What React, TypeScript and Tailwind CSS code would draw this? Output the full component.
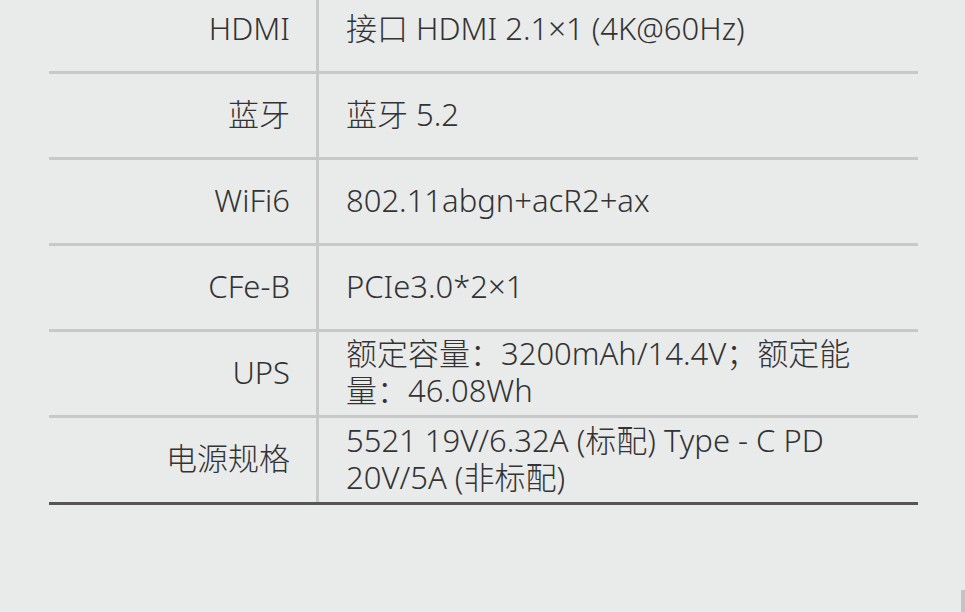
const specs: { label: string; lines: string[] }[] = [
  { label: 'HDMI', lines: ['接口 HDMI 2.1×1 (4K@60Hz)'] },
  { label: '蓝牙', lines: ['蓝牙 5.2'] },
  { label: 'WiFi6', lines: ['802.11abgn+acR2+ax'] },
  { label: 'CFe-B', lines: ['PCIe3.0*2×1'] },
  { label: 'UPS', lines: ['额定容量：3200mAh/14.4V；额定能', '量：46.08Wh'] },
  { label: '电源规格', lines: ['5521 19V/6.32A (标配) Type - C PD', '20V/5A (非标配)'] },
]

export default function App() {
  return (
    <div className="relative h-[612px] w-[965px] overflow-hidden bg-[#e9eaea] font-['Noto_Sans','Noto_Sans_CJK_SC',sans-serif] font-light text-[#333]">
      <div className="-mt-[12px] ml-[49px] w-[869px]">
        {specs.map((row, i) => (
          <div
            key={row.label}
            className={
              i === specs.length - 1
                ? 'flex h-[87px] border-b-[3px] border-[#555]'
                : 'flex h-[86px] border-b-[3px] border-[#c8c8c8]'
            }
          >
            <div className="flex w-[270px] shrink-0 items-center justify-end border-r-[3px] border-[#c8c8c8] pr-[26px] pb-[3px] text-[31px] leading-none">
              {row.label}
            </div>
            <div className="flex flex-col justify-center pl-[27px] pb-[3px] text-[31px] leading-[37px]">
              {row.lines.map((l) => (
                <div key={l} className="whitespace-nowrap">
                  {l}
                </div>
              ))}
            </div>
          </div>
        ))}
      </div>
      <div className="absolute bottom-0 right-0 h-[22px] w-[4px] bg-[#c4c4c4]" />
    </div>
  )
}
